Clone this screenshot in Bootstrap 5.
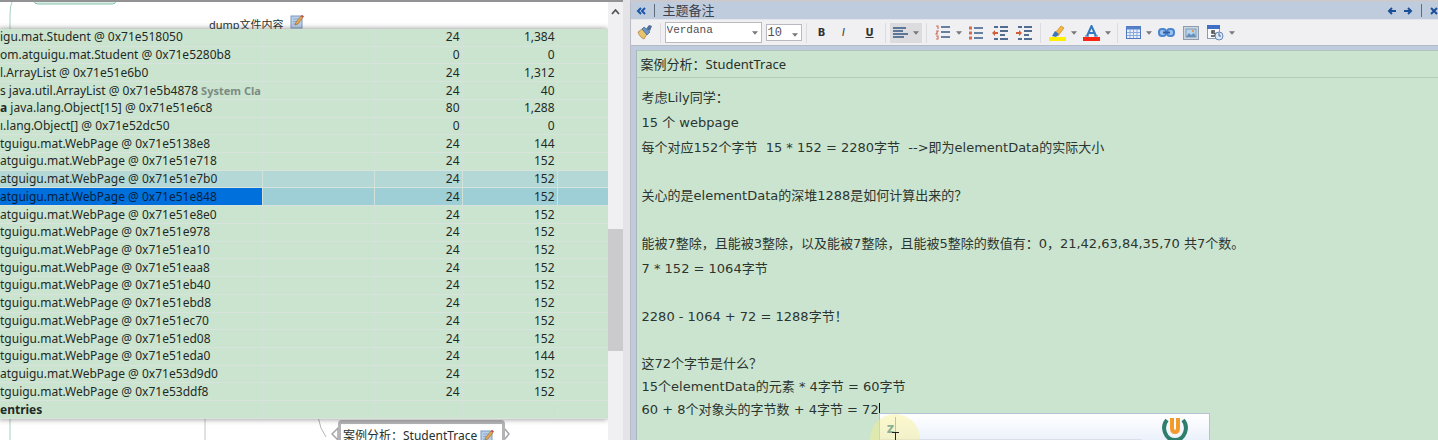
<!DOCTYPE html>
<html lang="zh-CN">
<head>
<meta charset="utf-8">
<meta name="viewport" content="width=device-width, initial-scale=1">
<title>主题备注</title>
<link href="https://cdn.jsdelivr.net/npm/bootstrap@5.3.0/dist/css/bootstrap.min.css" rel="stylesheet">
<style>
:root{--leaf:#cbe4cf;--steel:#bfccde;--panel:#f0eff2;--ink:#26302c}
body{font-family:"Noto Sans","Noto Sans CJK SC",sans-serif;font-size:12px;color:var(--ink);background:#e6e6ea}
.map-pane{flex:623 1 0;min-width:0;border-top:2px solid #929294}
.note-pane{flex:808 1 0;min-width:0;border-top:2px solid #c9c9ce;border-left:1px solid #b9bcc4;background:var(--steel)}
.splitter{flex:0 0 7px;background:#e4e4e8}
.map-canvas{background:#fff;min-width:0}
.node{line-height:20px;font-size:12px;white-space:nowrap}
.node-top{left:209px;top:13px;font-size:11px}
.node-sel{left:338px;bottom:-8px;border:3px solid #b4b4b6;border-top-width:4px;border-radius:4px;background:#fff;padding:2px 8px 0 2px;height:28px}
.wire{left:0;top:0}
.node-grips{left:331px}
.heap{left:0;right:0;top:27px;background:var(--leaf);border-radius:0 4px 4px 0;box-shadow:0 0 5px 1px rgba(60,60,60,.45)}
.heap table{table-layout:fixed;height:390px;font-size:12px;line-height:16px;color:#1f2a26;border-collapse:separate;border-spacing:0}
.heap td{padding:0 2px 0 0;border-right:1px solid #d2e2d9;border-bottom:1px solid #d7e3dc;white-space:nowrap;text-align:right}
.heap td:first-child{text-align:left;padding:0}
.heap td:last-child{border-right:0}
.heap .near td{background:#b3d8d5}
.heap .picked td{background:#9ecfd6}
.heap .picked td:first-child{background:#0070dc;color:#06203f}
.c-a{width:112px}.c-b{width:88px}.c-c{width:95px}.c-d{width:50px}
.muted-tag{color:#7b8a82;font-size:11px}
.scroller{width:15px;background:var(--panel)}
.scroller button{height:20px}
.thumb{margin-top:207px;height:122px;background:#cbcacd}
.bare{border:0;background:none;padding:0;color:inherit;line-height:1;display:inline-flex;align-items:center;justify-content:center}
.note-head{height:17px;color:#1c4f9c;padding:0 0 0 5px;font-size:13px;line-height:17px}
.note-head h1{font-size:13px;line-height:17px;color:#3a424e}
.bar-dark{width:1px;height:13px;background:#5f6a7a}
.tools{height:27px;background:var(--panel);border-bottom:1px solid #b3bac6;border-top:1px solid #e2e6ec;padding-left:6px}
.tools .bare{height:20px;color:#333}
.tools .arrow{width:9px}
.rule{width:1px;height:20px;background:#dcdce0}
.pick{appearance:none;border:1px solid #b9b9bf;background:#fff;font-family:"Liberation Mono",monospace;font-size:11px;line-height:12px;color:#4e4e4e;border-radius:0;padding:0 0 0 1px}
.pick-wrap svg{right:4px;top:9px}
.f-name{width:97px;height:21px;padding-bottom:5px}
.f-size{width:36px;height:17px;font-size:12px}
.on{background:#dcdcdf;width:32px}
.txt{width:22px;font-family:"DejaVu Sans",sans-serif;font-size:10px}
.sheet{margin:4px 0 0 5px;background:var(--leaf);border-left:1px solid #aab6b8;border-top:1px solid #b3c4be;min-height:0}
.sheet h2{font-size:13px;line-height:26px;height:27px;padding-left:4px;border-bottom:1px solid #b5cbb9;font-family:"Noto Sans","Noto Sans CJK SC",sans-serif}
.doc{font-family:"DejaVu Sans","Noto Sans CJK SC",sans-serif;font-size:13px;line-height:25px;padding:7px 0 0 5px;color:#2b3530}
.doc p{white-space:pre}
.gap{height:23px}
.close-set{line-height:23px}
.caret{width:1px;height:14px;background:#111;vertical-align:-3px}
.ime{left:0;top:10px;width:331px;height:60px;border:1px solid #b5c2d4;background:linear-gradient(#fff,#e8effa 30px);line-height:20px}
.ime input{border:0;background:transparent;width:262px;height:26px;padding:0 0 0 7px;font:bold 15px "Noto Sans",sans-serif;color:#3c86a0;border-bottom:1px solid #dadfe8}
.halo{left:-9px;top:11px;width:50px;height:50px;border-radius:50%;background:rgba(250,240,130,.4)}
.logo{right:21px;top:1px}
.ime-caret{left:15px;top:3px;width:1px;height:17px;background:#f08a5a}
.ibeam{left:13px;top:28px}
</style>
</head>
<body class="vh-100 overflow-hidden">
<svg class="d-none" aria-hidden="true">
<symbol id="dd" viewBox="0 0 7 4"><path d="M0 0h7L3.500 4z" fill="#77777c"/></symbol>
<symbol id="memo" viewBox="0 0 14 14"><rect x="1" y="1" width="11" height="12" fill="#b9cfea" stroke="#7c98bd"/><path d="M3 4h6M3 6.500h5M3 9h3" stroke="#8ba8cc"/><path d="M5 10l1-3 5-6 2 1.500-5 6.500z" fill="#e6a54a" stroke="#926b3c" stroke-width=".6"/><path d="M11 1l2 1.500 1-1.300L12 0z" fill="#c3453c"/></symbol>
</svg>
<div class="d-flex h-100 overflow-hidden">
<section class="map-pane d-flex" aria-label="思维导图">
<div class="map-canvas flex-grow-1 position-relative overflow-hidden">
<svg class="wire position-absolute w-100 h-100" fill="none" aria-hidden="true"><path d="M10 438V12Q10 4 12 0" stroke="#a5d0c0"/><path d="M34 -4v3q0 3 4 3h74q4 0 4-3v-3" stroke="#8cc4b0" fill="#d8ede4"/><path d="M205 400v40" stroke="#c4c4c4"/><path d="M318 415q2 12 8 20" stroke="#b5b5b5"/></svg>
<div class="node node-top position-absolute">dump文件内容 <svg class="ms-1 align-top" width="14" height="14"><use href="#memo"/></svg></div>
<svg class="node-grips position-absolute bottom-0" width="180" height="14" fill="#fff" stroke="#a5a5a8" stroke-width="1.500" aria-hidden="true"><path d="M7 2L1 8l6 6zM173 2l5 6-5 6z"/></svg>
<div class="node node-sel position-absolute">案例分析：StudentTrace <svg width="14" height="14"><use href="#memo"/></svg></div>
<div class="heap position-absolute">
<table class="w-100">
<colgroup><col><col class="c-a"><col class="c-b"><col class="c-c"><col class="c-d"></colgroup>
<tbody>
<tr><td>igu.mat.Student @ 0x71e518050</td><td></td><td>24</td><td>1,384</td><td></td></tr>
<tr><td>om.atguigu.mat.Student @ 0x71e5280b8</td><td></td><td>0</td><td>0</td><td></td></tr>
<tr><td>l.ArrayList @ 0x71e51e6b0</td><td></td><td>24</td><td>1,312</td><td></td></tr>
<tr><td>s java.util.ArrayList @ 0x71e5b4878 <b class="muted-tag">System Cla</b></td><td></td><td>24</td><td>40</td><td></td></tr>
<tr><td><b>a</b> java.lang.Object[15] @ 0x71e51e6c8</td><td></td><td>80</td><td>1,288</td><td></td></tr>
<tr><td>ı.lang.Object[] @ 0x71e52dc50</td><td></td><td>0</td><td>0</td><td></td></tr>
<tr><td>tguigu.mat.WebPage @ 0x71e5138e8</td><td></td><td>24</td><td>144</td><td></td></tr>
<tr><td>atguigu.mat.WebPage @ 0x71e51e718</td><td></td><td>24</td><td>152</td><td></td></tr>
<tr class="near"><td>atguigu.mat.WebPage @ 0x71e51e7b0</td><td></td><td>24</td><td>152</td><td></td></tr>
<tr class="picked"><td>atguigu.mat.WebPage @ 0x71e51e848</td><td></td><td>24</td><td>152</td><td></td></tr>
<tr><td>atguigu.mat.WebPage @ 0x71e51e8e0</td><td></td><td>24</td><td>152</td><td></td></tr>
<tr><td>tguigu.mat.WebPage @ 0x71e51e978</td><td></td><td>24</td><td>152</td><td></td></tr>
<tr><td>tguigu.mat.WebPage @ 0x71e51ea10</td><td></td><td>24</td><td>152</td><td></td></tr>
<tr><td>tguigu.mat.WebPage @ 0x71e51eaa8</td><td></td><td>24</td><td>152</td><td></td></tr>
<tr><td>tguigu.mat.WebPage @ 0x71e51eb40</td><td></td><td>24</td><td>152</td><td></td></tr>
<tr><td>tguigu.mat.WebPage @ 0x71e51ebd8</td><td></td><td>24</td><td>152</td><td></td></tr>
<tr><td>tguigu.mat.WebPage @ 0x71e51ec70</td><td></td><td>24</td><td>152</td><td></td></tr>
<tr><td>tguigu.mat.WebPage @ 0x71e51ed08</td><td></td><td>24</td><td>152</td><td></td></tr>
<tr><td>tguigu.mat.WebPage @ 0x71e51eda0</td><td></td><td>24</td><td>144</td><td></td></tr>
<tr><td>atguigu.mat.WebPage @ 0x71e53d9d0</td><td></td><td>24</td><td>152</td><td></td></tr>
<tr><td>tguigu.mat.WebPage @ 0x71e53ddf8</td><td></td><td>24</td><td>152</td><td></td></tr>
<tr><td><b>entries</b></td><td></td><td></td><td></td><td></td></tr>
</tbody>
</table>
</div>
</div>
<div class="scroller d-flex flex-column flex-shrink-0">
<button class="bare" type="button" aria-label="向上滚动"><svg width="9" height="6" fill="none" stroke="#55555a" stroke-width="1.800"><path d="M1 5l3.500-4L8 5"/></svg></button>
<div class="thumb"></div>
</div>
</section>
<div class="splitter"></div>
<section class="note-pane d-flex flex-column" aria-label="主题备注">
<header class="note-head d-flex align-items-center gap-2">
<button class="bare" type="button" aria-label="折叠"><svg width="10" height="8" fill="none" stroke="#1d56a8" stroke-width="2"><path d="M5 1L2 4l3 3M9 1L6 4l3 3"/></svg></button>
<span class="bar-dark"></span><h1 class="m-0 fw-normal">主题备注</h1>
<span class="flex-grow-1"></span>
<button class="bare" type="button" aria-label="后退"><svg width="9" height="8" fill="none" stroke="#1c4f96" stroke-width="2"><path d="M9 4H2M5 1L2 4l3 3"/></svg></button>
<button class="bare" type="button" aria-label="前进"><svg width="9" height="8" fill="none" stroke="#1c4f96" stroke-width="2"><path d="M0 4h7M4 1l3 3-3 3"/></svg></button>
<span class="bar-dark"></span>
<button class="bare" type="button" aria-label="关闭"><svg width="8" height="8" fill="none" stroke="#1c4f96" stroke-width="2"><path d="M1 1l6 6M7 1L1 7"/></svg></button>
</header>
<div class="tools d-flex align-items-center flex-shrink-0" role="toolbar" aria-label="格式">
<button class="bare" type="button" aria-label="格式刷"><svg width="15" height="15" viewBox="0 0 15 15"><path d="M1 7l4-3 5 5-3 5c-3-1-5-4-6-7z" fill="#e9c36b" stroke="#ac8746" stroke-width=".8"/><path d="M5 4l2-2 6 5-3 3z" fill="#6a94c8" stroke="#41658f" stroke-width=".7"/><path d="M9 4l3-4 3 1-2 5z" fill="#4d6f96"/></svg></button>
<span class="rule mx-1 ms-2"></span>
<span class="pick-wrap position-relative d-flex"><select class="pick f-name" aria-label="字体"><option>Verdana</option></select><svg class="position-absolute pe-none" width="6" height="4"><use href="#dd"/></svg></span>
<span class="pick-wrap position-relative d-flex ms-1"><select class="pick f-size" aria-label="字号"><option>10</option></select><svg class="position-absolute pe-none" width="6" height="4"><use href="#dd"/></svg></span>
<span class="rule ms-1"></span>
<button class="bare txt fw-bold ms-1" type="button">B</button>
<button class="bare txt fst-italic" type="button">I</button>
<button class="bare txt text-decoration-underline ms-1 fw-bold" type="button">U</button>
<span class="rule mx-1"></span>
<button class="bare on" type="button" aria-label="左对齐"><svg width="16" height="12" stroke="#5c7798" stroke-width="2"><path d="M0 1h13M0 4h10M0 7h15M0 10h11"/></svg><svg class="ms-1" width="6" height="4"><use href="#dd"/></svg></button>
<span class="rule ms-1 me-2"></span>
<button class="bare" type="button" aria-label="编号列表"><svg width="16" height="15" fill="none"><path d="M1 1h2v3M1 6h2l-2 3h2M1 11h2v3H1" stroke="#c9755e" stroke-width="1.200"/><path d="M6 2h9M6 7h9M6 12h9" stroke="#6680a2" stroke-width="2"/></svg></button>
<button class="bare arrow ms-1" type="button" aria-label="编号选项"><svg width="6" height="4"><use href="#dd"/></svg></button>
<button class="bare ms-1" type="button" aria-label="项目列表"><svg width="16" height="14"><path d="M1 2h3M1 7h3M1 12h3" stroke="#d96b48" stroke-width="3"/><path d="M6 2h9M6 7h9M6 12h9" stroke="#6680a2" stroke-width="2"/></svg></button>
<button class="bare ms-2" type="button" aria-label="减少缩进"><svg width="16" height="14"><path d="M0 7l3-3v2h3v2H3v2z" fill="#d35f38"/><path d="M2 1h4M8 1h8M8 5h8M8 9h5M2 13h4M8 13h8" stroke="#526c90" stroke-width="2"/></svg></button>
<button class="bare ms-2" type="button" aria-label="增加缩进"><svg width="16" height="14"><path d="M6 7L3 4v2H0v2h3v2z" fill="#d35f38"/><path d="M2 1h4M8 1h8M8 5h8M8 9h5M2 13h4M8 13h8" stroke="#526c90" stroke-width="2"/></svg></button>
<span class="rule mx-2"></span>
<button class="bare" type="button" aria-label="突出显示"><svg width="17" height="16"><path d="M6 8l6-7 3 2-6 8z" fill="#f5b840" stroke="#c58a2b" stroke-width=".7"/><path d="M3 11l3-5 4 3-3 3z" fill="#3f76b8"/><path d="M0 14h17" stroke="#fff000" stroke-width="4"/></svg></button>
<button class="bare arrow ms-1" type="button" aria-label="突出显示颜色"><svg width="6" height="4"><use href="#dd"/></svg></button>
<button class="bare ms-1" type="button" aria-label="字体颜色"><svg width="17" height="16" fill="none"><path d="M4 11L8.500 1 13 11M6 8h5" stroke="#3478be" stroke-width="2"/><path d="M2 11h4M11 11h4" stroke="#3478be"/><path d="M0 14h17" stroke="#fa2512" stroke-width="4"/></svg></button>
<button class="bare arrow ms-1" type="button" aria-label="字体颜色选项"><svg width="6" height="4"><use href="#dd"/></svg></button>
<span class="rule ms-1 me-2"></span>
<button class="bare" type="button" aria-label="表格"><svg width="15" height="13"><rect x=".5" y=".5" width="14" height="12" fill="#e8f0fc" stroke="#5077bb"/><path d="M0 2h15" stroke="#5480ca" stroke-width="3"/><path d="M4 3v9M7.500 3v9M11 3v9M1 6.500h13M1 9.500h13" stroke="#8aa9dc"/></svg></button>
<button class="bare arrow ms-1" type="button" aria-label="表格选项"><svg width="6" height="4"><use href="#dd"/></svg></button>
<button class="bare ms-1" type="button" aria-label="链接"><svg width="17" height="9" fill="none" stroke="#4a86cf" stroke-width="2"><rect x="1" y="1" width="7" height="7" rx="3" fill="#9fc2ed"/><rect x="9" y="1" width="7" height="7" rx="3" fill="#9fc2ed"/><path d="M5 4.500h7" stroke="#2e60a8"/></svg></button>
<button class="bare ms-2" type="button" aria-label="图片"><svg width="16" height="14"><rect x=".5" y=".5" width="15" height="13" fill="#cdd5df" stroke="#8e9cad"/><rect x="3" y="3" width="10" height="8" fill="#b6d5ef" stroke="#7d9dbd"/><path d="M3 11l3-4 2 2 3-2 2 4z" fill="#6490ba"/><circle cx="10" cy="5" r="1.200" fill="#e59a5b"/></svg></button>
<button class="bare ms-2" type="button" aria-label="日期时间"><svg width="17" height="16"><rect x=".5" y=".5" width="12" height="13" fill="#f6f8fb" stroke="#8b9cb5"/><path d="M0 2h13" stroke="#3e6fc4" stroke-width="4"/><path d="M8 6H5v2h2q2 0 1 3H4" stroke="#444" stroke-width="1.500" fill="none"/><circle cx="12" cy="11" r="4" fill="#dce9f8" stroke="#6686b3"/><path d="M12 8v3h2" stroke="#46658e" fill="none"/></svg></button>
<button class="bare arrow ms-1" type="button" aria-label="日期选项"><svg width="6" height="4"><use href="#dd"/></svg></button>
</div>
<article class="sheet flex-grow-1 overflow-hidden">
<h2 class="m-0 fw-normal">案例分析：StudentTrace</h2>
<div class="doc">
<p class="m-0">考虑Lily同学：</p>
<p class="m-0">15 个 webpage</p>
<p class="m-0">每个对应152个字节  15 * 152 = 2280字节  --&gt;即为elementData的实际大小</p>
<div class="gap"></div>
<p class="m-0">关心的是elementData的深堆1288是如何计算出来的？</p>
<div class="gap"></div>
<p class="m-0">能被7整除，且能被3整除，以及能被7整除，且能被5整除的数值有：0，21,42,63,84,35,70 共7个数。</p>
<p class="m-0">7 * 152 = 1064字节</p>
<div class="gap"></div>
<p class="m-0">2280 - 1064 + 72 = 1288字节！</p>
<div class="gap"></div>
<div class="close-set">
<p class="m-0">这72个字节是什么？</p>
<p class="m-0">15个elementData的元素 * 4字节 = 60字节</p>
<p class="m-0">60 + 8个对象头的字节数 + 4字节 = 72<span class="caret d-inline-block position-relative"><span class="ime position-absolute d-block"><input type="text" value="z" aria-label="输入法"><span class="ime-caret position-absolute"></span><svg class="logo position-absolute" width="26" height="28" fill="none" aria-hidden="true"><path d="M5 5C-1 12 3 25 13 25S27 12 21 5" stroke="#2f7d6c" stroke-width="4"/><path d="M10 3v10q0 4 3 4t3-4V3" stroke="#f39a2d" stroke-width="4"/></svg></span><span class="halo position-absolute"></span><svg class="ibeam position-absolute" width="7" height="16" fill="none" stroke="#222" aria-hidden="true"><path d="M0 1.500h7M3.500 2v14"/></svg></span></p>
</div>
</div>
</article>
</section>
</div>
</body>
</html>
